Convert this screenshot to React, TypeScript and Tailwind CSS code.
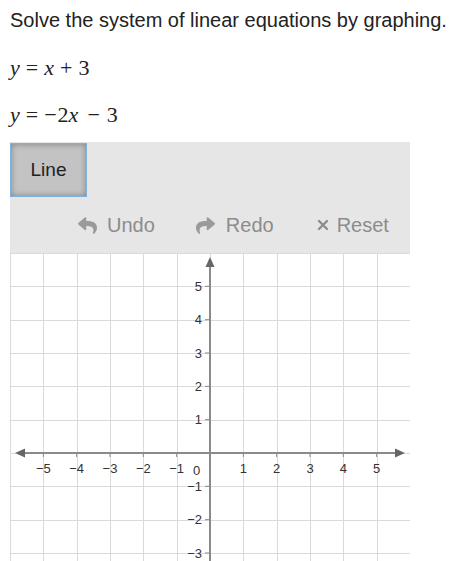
import { FaReply, FaShare } from 'react-icons/fa';

const CELL = 400 / 12;
const X = (v: number) => (v + 6) * CELL;
const Y = (v: number) => (6 - v) * CELL;

const range = (a: number, b: number) =>
    Array.from({ length: b - a + 1 }, (_, i) => a + i);

function Graph() {
    return (
        <svg width={400} height={308} className="block">
            {/* grid */}
            {range(-6, 6).map((v) => (
                <line
                    key={`v${v}`}
                    x1={Math.round(X(v)) + 0.5}
                    x2={Math.round(X(v)) + 0.5}
                    y1={0}
                    y2={308}
                    stroke="#dadada"
                    strokeWidth={1}
                />
            ))}
            {range(-3, 6).map((v) => (
                <line
                    key={`h${v}`}
                    y1={Math.round(Y(v)) + 0.5}
                    y2={Math.round(Y(v)) + 0.5}
                    x1={0}
                    x2={400}
                    stroke="#dadada"
                    strokeWidth={1}
                />
            ))}

            {/* ticks */}
            {range(-5, 5)
                .filter((v) => v !== 0)
                .map((v) => (
                    <line key={`tx${v}`} x1={X(v)} x2={X(v)} y1={200} y2={204} stroke="#8a8a8a" strokeWidth={1} />
                ))}
            {range(-3, 5)
                .filter((v) => v !== 0)
                .map((v) => (
                    <line key={`ty${v}`} x1={195} x2={200} y1={Y(v)} y2={Y(v)} stroke="#8a8a8a" strokeWidth={1} />
                ))}

            {/* axes */}
            <line x1={12} x2={388} y1={200} y2={200} stroke="#8a8a8a" strokeWidth={2} />
            <line x1={200} x2={200} y1={12} y2={308} stroke="#8a8a8a" strokeWidth={2} />
            <polygon points="5,200 15,195.5 15,204.5" fill="#666" />
            <polygon points="395,200 385,195.5 385,204.5" fill="#666" />
            <polygon points="200,4 195.5,14 204.5,14" fill="#666" />

            {/* labels */}
            <g fontFamily="'Liberation Sans', Arial, sans-serif" fontSize={13} fill="#333">
                {range(-5, 5)
                    .filter((v) => v !== 0)
                    .map((v) => (
                        <text key={`lx${v}`} x={X(v)} y={220} textAnchor="middle">
                            {v < 0 ? `\u2212${-v}` : v}
                        </text>
                    ))}
                {range(-3, 5)
                    .filter((v) => v !== 0)
                    .map((v) => (
                        <text key={`ly${v}`} x={192} y={Y(v) + 4.7} textAnchor="end">
                            {v < 0 ? `\u2212${-v}` : v}
                        </text>
                    ))}
                <text x={186.5} y={222} textAnchor="middle">
                    0
                </text>
            </g>
        </svg>
    );
}

export default function App() {
    return (
        <div className="w-[459px] h-[561px] overflow-hidden bg-white font-['Liberation_Sans',Arial,sans-serif]">
            {/* Enunciado */}
            <p className="pl-[10px] pt-[6px] text-[20px] leading-[28px] text-[#222]">
                Solve the system of linear equations by graphing.
            </p>

            {/* Ecuaciones */}
            <div className="pl-[10px] mt-[20px] font-['Liberation_Serif',serif] text-[22px] leading-[28px] text-[#222]">
                <span className="italic">y</span>
                <span className="ml-[6px] mr-[6px]">=</span>
                <span className="italic">x</span>
                <span className="ml-[6px] mr-[6px]">+</span>
                <span>3</span>
            </div>
            <div className="pl-[10px] mt-[19px] font-['Liberation_Serif',serif] text-[22px] leading-[28px] text-[#222]">
                <span className="italic">y</span>
                <span className="ml-[6px] mr-[6px]">=</span>
                <span className="mr-[1px]">−</span>
                <span>2</span>
                <span className="italic">x</span>
                <span className="ml-[9px] mr-[7px]">−</span>
                <span>3</span>
            </div>

            {/* Panel de herramientas */}
            <div className="ml-[10px] mt-[13px] w-[400px] bg-[#e6e6e6]">
                <div className="h-[55px] pt-px">
                    <button
                        type="button"
                        className="w-[77px] h-[54px] border border-[#7eb0dc] bg-[#c3c3c3] shadow-[inset_0_0_6px_rgba(0,0,0,0.35)] text-[19px] text-[#222]"
                    >
                        Line
                    </button>
                </div>
                <div className="h-[56px] flex items-center pl-[68px] text-[20px] text-[#8c8c8c]">
                    <FaReply className="w-[19px] h-[19px] text-[#9a9a9a]" />
                    <span className="ml-[10px]">Undo</span>
                    <FaShare className="ml-[41px] w-[19px] h-[19px] text-[#9a9a9a]" />
                    <span className="ml-[11px]">Redo</span>
                    <svg width={12} height={12} viewBox="0 0 12 12" className="ml-[43px]">
                        <path d="M2 2 L10 10 M10 2 L2 10" stroke="#8c8c8c" strokeWidth={2.4} strokeLinecap="round" />
                    </svg>
                    <span className="ml-[8px]">Reset</span>
                </div>
            </div>

            {/* Plano cartesiano */}
            <div className="ml-[10px]">
                <Graph />
            </div>
        </div>
    );
}
